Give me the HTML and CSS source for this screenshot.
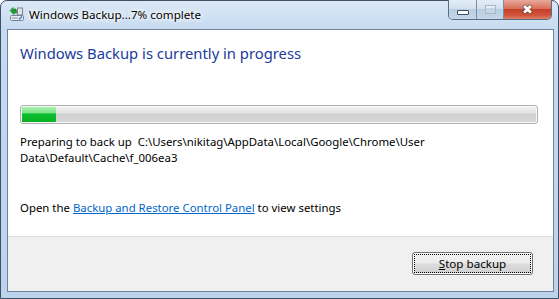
FILE: index.html
```html
<!DOCTYPE html>
<html>
<head>
<meta charset="utf-8">
<link rel="stylesheet" href="styles.css">
</head>
<body>
<div class="window">
  <div class="titlebar">
    <svg class="app-icon" width="16" height="16" viewBox="0 0 16 16">
      <rect x="1.5" y="9.5" width="13" height="5" rx="1" fill="#e8ecf0" stroke="#7a8594"/>
      <rect x="3" y="11" width="6" height="2" fill="#b5bec8"/>
      <path d="M10 13.5 L13 10.5" stroke="#3a6fc4" stroke-width="1.2"/>
      <rect x="8.5" y="2" width="5" height="7" fill="#dfe5ea" stroke="#7a8594"/>
      <path d="M1 4.5 L4 1.5 L4 3 L7 3 L7 6 L4 6 L4 7.5 Z" fill="#27b83a" stroke="#15722a" stroke-width="0.6"/>
      <path d="M2.5 5.5 L5 8.5 L5 7 L7.5 7 L7.5 4.5 L5 4.5 L5 3 Z" fill="#1fa631" stroke="#15722a" stroke-width="0.6"/>
    </svg>
    <span class="title">Windows Backup...7% complete</span>
    <div class="caption-buttons">
      <div class="cbtn min"><span class="min-glyph"></span></div>
      <div class="cbtn max"><span class="max-glyph"></span></div>
      <div class="cbtn close"><span class="close-glyph">&#x2716;</span></div>
    </div>
  </div>
  <div class="client">
    <div class="content">
      <h1 class="main-instruction">Windows Backup is currently in progress</h1>
      <div class="progress"><div class="progress-fill" style="width:34px"></div></div>
      <p class="status">Preparing to back up&nbsp; C:\Users\nikitag\AppData\Local\Google\Chrome\User<br>Data\Default\Cache\f_006ea3</p>
      <p class="settings">Open the <a class="link" href="#">Backup and Restore Control Panel</a> to view settings</p>
    </div>
    <div class="footer">
      <button class="button"><span class="focus"><u>S</u>top backup</span></button>
    </div>
  </div>
</div>
</body>
</html>
```
FILE: styles.css
```css
* { box-sizing: border-box; }
html, body { margin: 0; padding: 0; background: #fff; }
body { width: 559px; height: 299px; overflow: hidden; font-family: "Noto Sans", "Open Sans", sans-serif; font-size: 11.4px; color: #000; }

.window {
  width: 559px; height: 299px;
  border: 1px solid #3f5169;
  border-radius: 7px 7px 0 0;
  background: linear-gradient(180deg, #dbe8f6 0px, #c6daf0 28px, #bcd3ec 100%);
  padding: 0 4px 6px 6px;
  display: flex; flex-direction: column;
}

.titlebar {
  height: 28px; flex: none;
  display: flex; align-items: flex-start;
}
.app-icon { margin: 5px 0 0 2px; flex: none; }
.title {
  margin: 6px 0 0 4px;
  font-size: 11.6px; line-height: 16px; color: #000;
  text-shadow: 0 0 6px #fff, 0 0 6px #fff, 0 0 3px #fff;
}
.caption-buttons {
  margin-left: auto; margin-top: -1px; margin-right: 2px;
  display: flex; height: 20px;
  border: 1px solid #5a6d86; border-top: none;
  border-radius: 0 0 5px 5px;
  overflow: hidden;
}
.cbtn { height: 100%; display: flex; align-items: center; justify-content: center; }
.min, .max {
  background: linear-gradient(180deg, #e3edf7 0%, #d2e0ef 45%, #b9cde2 50%, #c5d8ea 100%);
  border-right: 1px solid #7b8ea6;
}
.min { width: 28px; }
.max { width: 27px; }
.close {
  width: 47px;
  background: linear-gradient(180deg, #e9a99a 0%, #d7705b 45%, #c7402a 50%, #d0533b 80%, #e0806a 100%);
}
.min-glyph { width: 12px; height: 5px; margin-top: 5px; background: #fff; border: 1px solid #3c4e64; border-radius: 1px; }
.max-glyph { width: 11px; height: 9px; border: 1px solid #a8b6c6; box-shadow: inset 0 2px 0 #e8eef5, inset 0 0 0 3px #c8d5e3; }
.close-glyph { color: #fff; font-family: "DejaVu Sans", sans-serif; font-size: 13px; line-height: 1; text-shadow: 0 0 1px #3a1a14, 0 0 1px #3a1a14, 0 0 1px #3a1a14; }

.client {
  flex: 1;
  border: 1px solid #6f8299;
  background: #fff;
  display: flex; flex-direction: column;
}
.content { flex: 1; padding: 13px 12px 0 12px; }
.main-instruction {
  margin: 0; font-weight: normal;
  font-size: 14.8px; line-height: 20px; color: #1c3b9b;
}
.progress {
  margin-top: 42px;
  height: 19px; width: 518px;
  border: 1px solid #b0b0b0; border-radius: 3px;
  background: linear-gradient(180deg, #f4f4f4 0%, #e2e2e2 40%, #d0d0d0 50%, #d8d8d8 100%);
  padding: 1px;
  box-shadow: inset 0 0 0 1px #f8f8f8;
}
.progress-fill {
  height: 100%;
  background: linear-gradient(180deg, #a9f0ae 0%, #7ee487 40%, #0fc033 45%, #06b025 100%);
  border-radius: 1px;
}
.status {
  margin: 10px 0 0 0; line-height: 16px;
}
.settings { margin: 34px 0 0 0; line-height: 16px; }
.link { color: #0066cc; text-decoration: underline; }

.footer {
  flex: none; height: 55px;
  border-top: 1px solid #dfdfdf;
  background: #f0f0f0;
  display: flex; justify-content: flex-end; align-items: flex-start;
  padding: 15px 20px 0 0;
}
.button {
  width: 121px; height: 23px; padding: 1px;
  border: 1px solid #707070; border-radius: 3px;
  background: linear-gradient(180deg, #f2f2f2 0%, #ebebeb 48%, #dddddd 52%, #cfcfcf 100%);
  box-shadow: inset 0 0 0 1px #fcfcfc;
  font-family: inherit; font-size: 11.6px; color: #000;
  display: flex;
}
.focus {
  flex: 1; display: flex; align-items: center; justify-content: center;
  border: 1px dotted #000;
}
```
